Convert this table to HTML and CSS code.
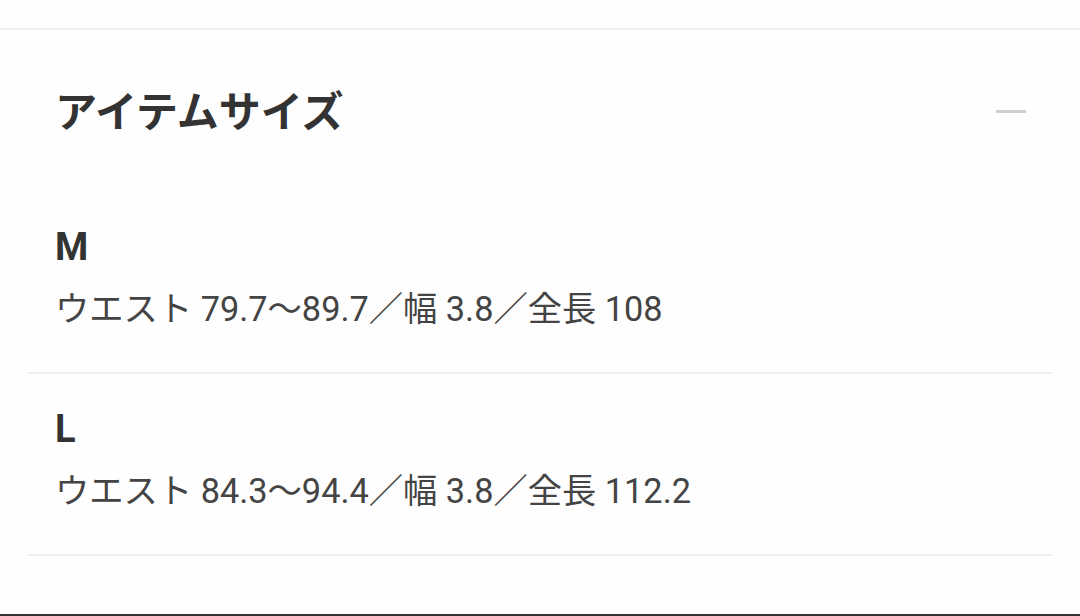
FILE: index.html
```html
<!DOCTYPE html>
<html lang="ja">
<head>
<meta charset="utf-8">
<link rel="stylesheet" href="styles.css">
</head>
<body>
<div class="page">
  <div class="topline"></div>
  <section class="accordion">
    <div class="acc-header">
      <h2 class="acc-title">アイテムサイズ</h2>
      <span class="acc-minus"></span>
    </div>
    <ul class="size-list">
      <li class="size-item">
        <div class="size-label">M</div>
        <div class="size-detail">ウエスト 79.7〜89.7／幅 3.8／全長 108</div>
      </li>
      <li class="size-item">
        <div class="size-label">L</div>
        <div class="size-detail">ウエスト 84.3〜94.4／幅 3.8／全長 112.2</div>
      </li>
    </ul>
  </section>
  <div class="bottom-bar"></div>
</div>
</body>
</html>
```

FILE: styles.css
```css
* { box-sizing: border-box; }
html, body {
  margin: 0;
  padding: 0;
  background: #fefefe;
}
body {
  font-family: Roboto, "Noto Sans CJK JP", sans-serif;
  color: #333;
}
.page {
  width: 1080px;
  height: 616px;
  padding-top: 28px;
  overflow: hidden;
}
.topline {
  height: 2px;
  background: #efefef;
}
.acc-header {
  display: flex;
  align-items: center;
  justify-content: space-between;
  padding: 54px 54px 58px 55px;
}
.acc-title {
  margin: 0;
  font-size: 42px;
  line-height: 50px;
  font-weight: 700;
  color: #333;
  font-family: "Noto Sans CJK JP", sans-serif;
}
.acc-minus {
  width: 30px;
  height: 3px;
  background: #cfcfcf;
  margin-top: 5px;
}
.size-list {
  list-style: none;
  margin: 0;
  padding: 0 27px;
}
.size-item {
  padding: 35px 28px 43px;
  border-bottom: 2px solid #f0f0f0;
}
.size-label {
  font-size: 38px;
  line-height: 40px;
  font-weight: 700;
  color: #333;
  margin-bottom: 22px;
}
.size-detail {
  font-size: 34.3px;
  line-height: 40px;
  color: #444;
}
.bottom-bar {
  margin-top: 58px;
  height: 2px;
  background: #333;
}
```
